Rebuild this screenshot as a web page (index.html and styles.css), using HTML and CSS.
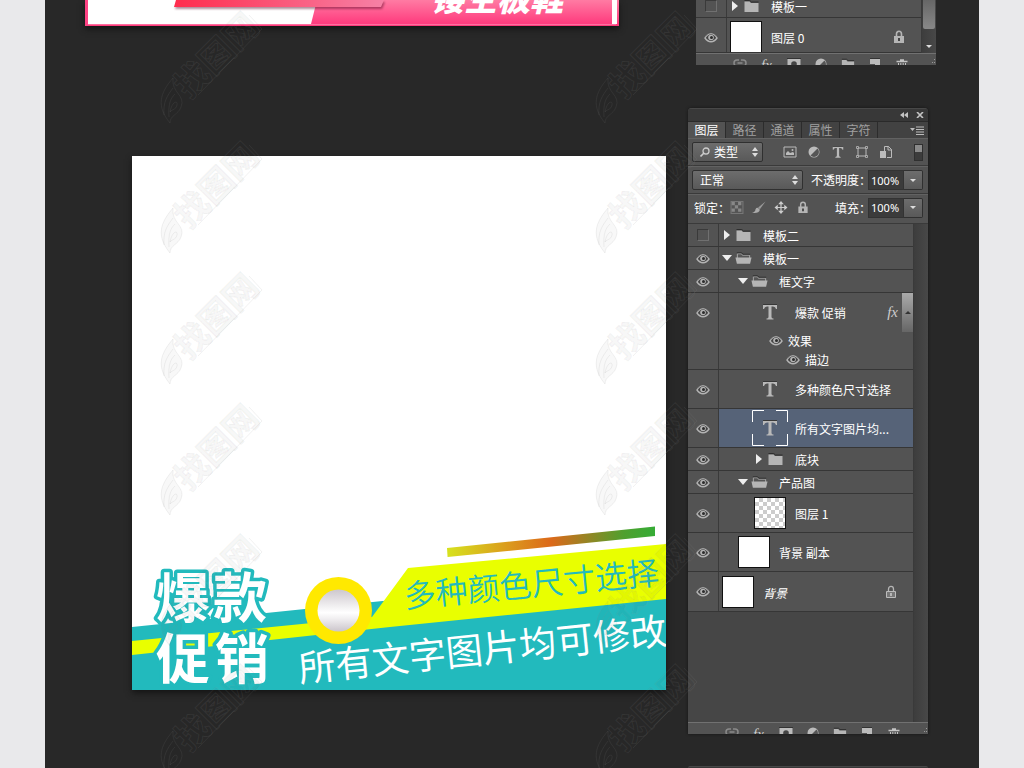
FILE: index.html
```html
<!DOCTYPE html>
<html lang="zh-CN">
<head>
<meta charset="utf-8">
<title>主图模板</title>
<link rel="stylesheet" href="styles.css">
</head>
<body>
<svg class="defs" aria-hidden="true">
  <symbol id="eye" viewBox="0 0 14 11"><path d="M1 6Q3.500 1.500 7 1.500T13 6Q10.500 9.800 7 9.800T1 6z" fill="#444" stroke="#b4b4b4" stroke-width="1.400"/><path d="M1.500 4Q4 .7 7 .7T12.500 4" fill="none" stroke="#3a3a3a" stroke-width=".6"/><circle cx="7" cy="5.500" r="2.800" fill="#b4b4b4"/><circle cx="7.500" cy="5.500" r="1.500" fill="#2c2c2c"/></symbol>
  <symbol id="folder" viewBox="0 0 16 12"><path d="M1 1.500h5l1.500 1.500H15V12H1z" fill="#b5b5b5"/><path d="M1 .5h5.300L8 2h7" fill="none" stroke="#2e2e2e"/></symbol>
  <symbol id="folder-open" viewBox="0 0 18 12"><path d="M2.500 6V1.500h4L8 3h7.500v3" fill="#555" stroke="#aaa"/><path d="M.5 5.500h17L16 12H2z" fill="#b5b5b5"/><path d="M2 .5h5L8.500 2H16" fill="none" stroke="#2e2e2e"/></symbol>
  <symbol id="right" viewBox="0 0 10 10"><path d="M2 0l6 5-6 5z" fill="#eee"/></symbol>
  <symbol id="down" viewBox="0 0 10 10"><path d="M0 2h10L5 8z" fill="#eee"/></symbol>
  <symbol id="type" viewBox="0 0 16 16"><path d="M1 1h14v4h-1q-.5-2.500-3-2.500H9.500V13q0 1.500 2 1.500v1h-7v-1q2 0 2-1.500V2.500H5Q2.500 2.500 2 5H1z" fill="#b9b9b9"/><path d="M1 .5h14" stroke="#383838"/></symbol>
  <symbol id="lock" viewBox="0 0 12 14"><path d="M3.500 7V4a2.500 2.700 0 0 1 5 0v3" fill="none" stroke="#b5b5b5" stroke-width="1.600"/><path d="M1 6h10v7H1z" fill="#b5b5b5"/><path d="M6 8v3" stroke="#444" stroke-width="2"/></symbol>
  <symbol id="lock-line" viewBox="0 0 12 14"><path d="M3.500 6V4a2.500 2.700 0 0 1 5 0v2" fill="none" stroke="#b5b5b5" stroke-width="1.300"/><path d="M1.500 6.500h9v6h-9z" fill="#777" stroke="#bbb"/><path d="M6 8v3" stroke="#ccc" stroke-width="1.500"/></symbol>
  <symbol id="half" viewBox="0 0 12 12"><circle cx="6" cy="6" r="5.500" fill="#bbb"/><path d="M9.500 2.500a4.900 4.900 0 0 1-7 7z" fill="#555"/></symbol>
  <symbol id="updown" viewBox="0 0 6 10"><path d="M0 4l3-4 3 4zM0 6l3 4 3-4z" fill="#ddd"/></symbol>
  <symbol id="link" viewBox="0 0 14 12"><path d="M6 2H4a3 3 0 0 0 0 6h2M8 2h2a3 3 0 0 1 0 6H8M4.500 5h5" fill="none" stroke="#8b8b8b" stroke-width="1.500"/></symbol>
  <symbol id="mask" viewBox="0 0 14 12"><path d="M.5 1h13v10H.5z" fill="#bbb"/><circle cx="7" cy="6" r="2.800" fill="#444"/><path d="M0 .5h14" stroke="#333"/></symbol>
  <symbol id="page" viewBox="0 0 12 12"><path d="M1 1h10v10H6V6H1z" fill="#bbb"/><path d="M1 .5h10" stroke="#333"/></symbol>
  <symbol id="trash" viewBox="0 0 12 12"><path d="M.5 3.500h11M4 2h4" stroke="#c4c4c4" stroke-width="1.500"/><path d="M2.500 5v7M4.800 5v7M7.200 5v7M9.500 5v7" stroke="#c4c4c4"/></symbol>
  <symbol id="grip" viewBox="0 0 6 8"><path d="M4 1h1v1H4zM2 4h1v1H2zM4 4h1v1H4z" fill="#999"/></symbol>
  <symbol id="mark" viewBox="0 0 110 120" overflow="visible">
    <path d="M13 114C-1 97 3 84 16 69c-2 15 13 17 8 29-3 8-11 8-11 16zM7 106c-1-13 3-19 9-27M12 108c-1-14 2-19 6-23M13 103c2-11 8-12 7-7s-5 4-7 7z"/>
    <text class="mark-text" transform="translate(32 91) rotate(-45)">找图网</text>
    <path d="M41 86L105 20 92 6" fill="none"/>
  </symbol>
</svg>

<main class="board">
  <section class="showcase showcase-first">
    <svg class="banner" viewBox="0 0 534 26" role="img" aria-label="镂空板鞋">
      <defs>
        <linearGradient id="pink" x1="0" y1="0" x2="0" y2="1"><stop offset="0" stop-color="#ff7ba3"/><stop offset=".85" stop-color="#ff3f80"/><stop offset="1" stop-color="#ff3b7d"/></linearGradient>
        <linearGradient id="red"><stop offset="0" stop-color="#ff2c4d"/><stop offset="1" stop-color="#f681a6"/></linearGradient>
      </defs>
      <path d="M0 0h534v26H0z" fill="url(#pink)"/>
      <path d="M0 0h3v26H0z" fill="#ff4385"/>
      <path d="M3 0h229l-6 24H3z" fill="#fff"/>
      <path d="M3 24.500h528" stroke="#ff6f9f"/>
      <path d="M527 0h5v24h-5z" fill="#fff"/>
      <path class="ribbon" d="M91 0h208l-3 7H89z" fill="url(#red)"/>
      <text class="banner-text" x="346" y="11">镂空板鞋</text>
    </svg>
    <aside class="panel panel-tail" aria-label="图层">
      <div class="list-area">
        <ul class="layers">
          <li class="layer group first-cut"><span class="vis"><input type="checkbox" class="hidden-box" aria-label="显示 模板一"></span><div class="body l0"><svg class="tri"><use href="#right"/></svg><svg class="fold"><use href="#folder"/></svg><span class="name">模板一</span></div></li>
          <li class="layer last-cut"><button class="vis" aria-label="隐藏 图层 0"><svg class="eye"><use href="#eye"/></svg></button><div class="body l0"><span class="thumb"></span><span class="name">图层 0</span><svg class="lock"><use href="#lock"/></svg></div></li>
        </ul>
        <div class="track"><span class="bar"></span><span class="caret"></span></div>
      </div>
      <footer class="tools">
        <button aria-label="链接"><svg><use href="#link"/></svg></button><button class="fx" aria-label="图层样式">fx</button><button aria-label="蒙版"><svg><use href="#mask"/></svg></button><button aria-label="调整"><svg><use href="#half"/></svg></button><button aria-label="新建组"><svg><use href="#folder"/></svg></button><button aria-label="新建图层"><svg><use href="#page"/></svg></button><button aria-label="删除"><svg><use href="#trash"/></svg></button><svg class="grip"><use href="#grip"/></svg>
      </footer>
    </aside>
  </section>

  <section class="showcase showcase-second">
    <svg class="art" viewBox="0 0 534 534" role="img" aria-label="爆款促销">
      <defs>
        <linearGradient id="rainbow"><stop offset="0" stop-color="#d6e21e"/><stop offset=".27" stop-color="#dba01d"/><stop offset=".5" stop-color="#dc691a"/><stop offset=".85" stop-color="#4fa02e"/><stop offset="1" stop-color="#35ac36"/></linearGradient>
        <linearGradient id="silver" x1="0" y1="0" x2="0" y2="1"><stop offset="0" stop-color="#cdc7cd"/><stop offset=".55" stop-color="#fff"/><stop offset=".7" stop-color="#f0eef0"/><stop offset="1" stop-color="#cbc5cb"/></linearGradient>
      </defs>
      <path d="M0 0h534v534H0z" fill="#fff"/>
      <path d="M0 471L270 443H534v91H0z" fill="#22babd"/>
      <path d="M0 485L240 461 276 412 534 388v55L258 471 0 499z" fill="#e9ff00"/>
      <path d="M315 392L523 370.500V380L315.600 401z" fill="url(#rainbow)"/>
      <circle cx="206.500" cy="454.500" r="33.500" fill="#ffe900"/>
      <circle cx="206.500" cy="454.500" r="21" fill="url(#silver)"/>
      <text class="promo" y="462"><tspan x="24">爆</tspan><tspan x="81">款</tspan></text>
      <text class="promo" y="523"><tspan x="24">促</tspan><tspan x="83">销</tspan></text>
      <text class="choice" transform="translate(273 452) rotate(-5.400)">多种颜色尺寸选择</text>
      <text class="editable" transform="translate(168 526) rotate(-5.900)">所有文字图片均可修改</text>
    </svg>

    <aside class="panel panel-full" aria-label="图层面板">
      <header class="titlebar">
        <button aria-label="折叠"><svg viewBox="0 0 8 6"><path d="M4 0v6L0 3zM8 0v6L4 3z" fill="#c4c4c4"/></svg></button>
        <button aria-label="关闭"><svg viewBox="0 0 8 6"><path d="M1 0l6 6M7 0L1 6" stroke="#c4c4c4" stroke-width="1.600"/></svg></button>
      </header>
      <nav class="tabs" role="tablist">
        <button role="tab" aria-selected="true">图层</button><button role="tab" aria-selected="false">路径</button><button role="tab" aria-selected="false">通道</button><button role="tab" aria-selected="false">属性</button><button role="tab" aria-selected="false">字符</button>
        <button class="menu" aria-label="面板菜单"><svg viewBox="0 0 14 9"><path d="M0 2h5L2.500 5zM6 .5h8v1H6zM6 3h8v1H6zM6 5.500h8v1H6zM6 8h8v1H6z" fill="#bbb"/></svg></button>
      </nav>
      <div class="row filter">
        <label class="pick pick-kind"><svg class="lens" viewBox="0 0 10 10"><circle cx="6" cy="4" r="3" fill="none" stroke="#ccc" stroke-width="1.300"/><path d="M4 6L.5 9.500" stroke="#ccc" stroke-width="1.600"/></svg><select aria-label="筛选类型"><option>类型</option></select><svg class="ud"><use href="#updown"/></svg></label>
        <div class="kinds">
          <button aria-label="像素图层"><svg viewBox="0 0 14 12"><path d="M1 1h12v10H1z" fill="none" stroke="#bbb"/><path d="M3 9V7l2-2 2 2 3-1 1 1v2z" fill="#bbb"/><circle cx="9.500" cy="4" r="1" fill="#bbb"/></svg></button>
          <button aria-label="调整图层"><svg><use href="#half"/></svg></button>
          <button aria-label="文字图层"><svg><use href="#type"/></svg></button>
          <button aria-label="形状图层"><svg viewBox="0 0 12 12"><path d="M2 2h8v8H2z" fill="none" stroke="#bbb"/><path d="M.5.5h2v2h-2zM9.500.5h2v2h-2zM.5 9.500h2v2h-2zM9.500 9.500h2v2h-2z" fill="#555" stroke="#bbb" stroke-width=".8"/></svg></button>
          <button aria-label="智能对象"><svg viewBox="0 0 12 12"><path d="M4.500 5V.5h4l3 3v8H7" fill="none" stroke="#bbb"/><path d="M8 0v4h4" fill="none" stroke="#bbb"/><path d="M0 5h6v7H0z" fill="#bbb"/></svg></button>
        </div>
        <button class="toggle" aria-label="打开或关闭筛选"></button>
      </div>
      <div class="row blend">
        <label class="pick pick-mode"><select aria-label="混合模式"><option>正常</option></select><svg class="ud"><use href="#updown"/></svg></label>
        <label class="amount"><span>不透明度：</span><input type="text" value="100%"></label><button class="drop" aria-label="调整不透明度"></button>
      </div>
      <div class="row locks">
        <span class="caption">锁定：</span>
        <div class="lock-set">
          <button aria-label="锁定透明像素"><svg viewBox="0 0 12 12"><path d="M.5.5h11v11H.5z" fill="#555" stroke="#777"/><path d="M1 1h3v3H1zM7 1h3v3H7zM4 4h3v3H4zM1 7h3v3H1zM7 7h3v3H7z" fill="#888"/></svg></button>
          <button aria-label="锁定图像像素"><svg viewBox="0 0 16 14"><path d="M15.500 0L7 7l2 2z" fill="#999"/><path d="M7 7.500l2 2Q8 14 0 13q4-1 4-4 1-2 3-1.500z" fill="#aaa"/></svg></button>
          <button aria-label="锁定位置"><svg viewBox="0 0 14 14"><path d="M7 2v10M2 7h10" stroke="#ccc" stroke-width="1.300"/><path d="M7 0l3 3.500H4zM7 14l3-3.500H4zM0 7l3.500-3v6zM14 7l-3.500-3v6z" fill="#ccc"/></svg></button>
          <button aria-label="锁定全部"><svg><use href="#lock"/></svg></button>
        </div>
        <label class="amount"><span>填充：</span><input type="text" value="100%"></label><button class="drop" aria-label="调整填充"></button>
      </div>

      <div class="list-area">
        <ul class="layers">
          <li class="layer group"><span class="vis"><input type="checkbox" class="hidden-box" aria-label="显示 模板二"></span><div class="body l0"><svg class="tri"><use href="#right"/></svg><svg class="fold"><use href="#folder"/></svg><span class="name">模板二</span></div></li>
          <li class="layer group"><button class="vis" aria-label="隐藏 模板一"><svg class="eye"><use href="#eye"/></svg></button><div class="body l0"><svg class="tri"><use href="#down"/></svg><svg class="fold"><use href="#folder-open"/></svg><span class="name">模板一</span></div></li>
          <li class="layer group"><button class="vis" aria-label="隐藏 框文字"><svg class="eye"><use href="#eye"/></svg></button><div class="body l1"><svg class="tri"><use href="#down"/></svg><svg class="fold"><use href="#folder-open"/></svg><span class="name">框文字</span></div></li>
          <li class="layer styled"><button class="vis" aria-label="隐藏 爆款 促销"><svg class="eye"><use href="#eye"/></svg></button>
            <div class="stack">
              <div class="body l2"><span class="glyph"><svg><use href="#type"/></svg></span><span class="name">爆款 促销</span><span class="fx">fx</span></div>
              <div class="effect"><svg class="eye"><use href="#eye"/></svg>效果</div>
              <div class="effect sub"><svg class="eye"><use href="#eye"/></svg>描边</div>
            </div>
            <span class="scroll-thumb"></span></li>
          <li class="layer"><button class="vis" aria-label="隐藏 多种颜色尺寸选择"><svg class="eye"><use href="#eye"/></svg></button><div class="body l2"><span class="glyph"><svg><use href="#type"/></svg></span><span class="name">多种颜色尺寸选择</span></div></li>
          <li class="layer selected"><button class="vis" aria-label="隐藏 所有文字图片均可修改"><svg class="eye"><use href="#eye"/></svg></button><div class="body l2"><span class="glyph"><svg><use href="#type"/></svg><svg class="frame" viewBox="0 0 36 36"><path d="M.5 12V.5H12M24 .5h11.500V12M35.500 24v11.500H24M12 35.500H.5V24" fill="none" stroke="#fff"/></svg></span><span class="name">所有文字图片均...</span></div></li>
          <li class="layer group"><button class="vis" aria-label="隐藏 底块"><svg class="eye"><use href="#eye"/></svg></button><div class="body l2"><svg class="tri"><use href="#right"/></svg><svg class="fold"><use href="#folder"/></svg><span class="name">底块</span></div></li>
          <li class="layer group"><button class="vis" aria-label="隐藏 产品图"><svg class="eye"><use href="#eye"/></svg></button><div class="body l1"><svg class="tri"><use href="#down"/></svg><svg class="fold"><use href="#folder-open"/></svg><span class="name">产品图</span></div></li>
          <li class="layer"><button class="vis" aria-label="隐藏 图层 1"><svg class="eye"><use href="#eye"/></svg></button><div class="body l2"><span class="thumb checker"></span><span class="name">图层 1</span></div></li>
          <li class="layer"><button class="vis" aria-label="隐藏 背景 副本"><svg class="eye"><use href="#eye"/></svg></button><div class="body l1"><span class="thumb"></span><span class="name">背景 副本</span></div></li>
          <li class="layer base"><button class="vis" aria-label="隐藏 背景"><svg class="eye"><use href="#eye"/></svg></button><div class="body l0"><span class="thumb"></span><em class="name">背景</em><svg class="lock"><use href="#lock-line"/></svg></div></li>
        </ul>
        <div class="track"></div>
      </div>
      <footer class="tools">
        <button aria-label="链接"><svg><use href="#link"/></svg></button><button class="fx" aria-label="图层样式">fx</button><button aria-label="蒙版"><svg><use href="#mask"/></svg></button><button aria-label="调整"><svg><use href="#half"/></svg></button><button aria-label="新建组"><svg><use href="#folder"/></svg></button><button aria-label="新建图层"><svg><use href="#page"/></svg></button><button aria-label="删除"><svg><use href="#trash"/></svg></button><svg class="grip"><use href="#grip"/></svg>
      </footer>
    </aside>
  </section>

  <section class="showcase showcase-next"><div class="panel panel-edge"></div></section>

  <svg class="marks" aria-hidden="true">
    <g id="mark-column">
      <use href="#mark" x="112" y="9" width="110" height="120"/>
      <use href="#mark" x="112" y="139" width="110" height="120"/>
      <use href="#mark" x="112" y="270" width="110" height="120"/>
      <use href="#mark" x="112" y="401" width="110" height="120"/>
      <use href="#mark" x="112" y="532" width="110" height="120"/>
      <use href="#mark" x="112" y="662" width="110" height="120"/>
    </g>
    <use href="#mark-column" x="435"/>
  </svg>
</main>
</body>
</html>
```

FILE: styles.css
```css
* { box-sizing: border-box; }
body {
  margin: 0;
  background: #e9e9eb;
  color: #fff;
  font: 12px/16px "Noto Sans CJK SC", sans-serif;
}
button, input, select {
  margin: 0;
  padding: 0;
  border: 0;
  background: none;
  color: inherit;
  font: inherit;
}
button { display: flex; align-items: center; justify-content: center; }
svg { display: block; flex: none; }
.defs { position: absolute; width: 0; height: 0; }

.board {
  position: relative;
  margin: 0 45px;
  min-height: 100vh;
  overflow: hidden;
  background: #282828;
}
.showcase { display: flex; align-items: flex-start; }
.showcase-first { padding: 0 43px 0 40px; gap: 77px; }
.showcase-second { padding: 43px 51px 32px 87px; gap: 22px; }
.showcase-next { justify-content: flex-end; padding-right: 51px; }

/* artwork */
.banner, .art { flex: 1 1 0; min-width: 0; box-shadow: 0 3px 6px #151515; }
.art { margin-top: 48px; }
.ribbon { filter: drop-shadow(1px 2px 1px rgba(80, 0, 30, .45)); }
.banner-text { font-size: 33px; font-weight: 900; font-style: italic; fill: #fff; }
.promo {
  font-size: 54px;
  font-weight: 700;
  fill: #fff;
  stroke: #22babd;
  stroke-width: 7px;
  stroke-linejoin: round;
  paint-order: stroke;
}
.choice { font-size: 32px; font-weight: 350; fill: #22babd; }
.editable { font-size: 37px; font-weight: 400; fill: #fff; }

/* panel */
.panel { flex: 0 0 240px; overflow: hidden; background: #535353; }
.panel-full { border-radius: 4px 4px 0 0; box-shadow: 0 0 3px #151515; }
.panel-edge { height: 2px; border-top: 1px solid #484848; border-radius: 4px 4px 0 0; background: #383838; }
.titlebar {
  display: flex;
  justify-content: flex-end;
  align-items: center;
  gap: 8px;
  height: 13px;
  padding-right: 4px;
  border-top: 1px solid #484848;
  background: #383838;
}
.titlebar svg { width: 8px; height: 6px; }
.tabs {
  display: flex;
  height: 17px;
  border-top: 1px solid #2a2a2a;
  background: #424242;
}
.tabs button { width: 38px; border-right: 1px solid #2c2c2c; color: #a0a0a0; }
.tabs button[aria-selected="true"] { background: #535353; color: #fff; }
.tabs .menu { margin-left: auto; width: 22px; border: 0; }
.menu svg { width: 14px; height: 9px; }
.row {
  display: flex;
  align-items: center;
  height: 28px;
  padding: 0 5px 0 4px;
  border-top: 1px solid #626262;
  border-bottom: 1px solid #3a3a3a;
}
.row.locks { height: 30px; padding-bottom: 3px; }
.pick {
  display: flex;
  align-items: center;
  height: 20px;
  padding: 0 4px 0 7px;
  border: 1px solid #303030;
  border-radius: 2px;
  background: linear-gradient(#6d6d6d, #595959);
}
.pick-kind { width: 71px; }
.pick-mode { width: 111px; }
.pick select { flex: 1; min-width: 0; appearance: none; outline: none; }
.lens { width: 10px; height: 10px; margin-right: 4px; }
.ud { width: 6px; height: 10px; }
.kinds { display: flex; flex: 1; padding: 0 21px 0 20px; justify-content: space-between; }
.kinds svg { width: 14px; height: 12px; }
.toggle {
  width: 9px;
  height: 17px;
  border: 1px solid #303030;
  background: linear-gradient(#8a8a8a 50%, #3c3c3c 50%);
}
.amount { display: flex; align-items: center; margin-left: auto; }
.amount input {
  width: 36px;
  height: 20px;
  padding: 0 2px;
  border: 1px solid #333;
  background: #3b3b3b;
  font: 11px/16px "Noto Sans", sans-serif;
}
.amount span { margin-right: -3px; }
.drop {
  width: 19px;
  height: 20px;
  border: 1px solid #303030;
  border-left: 0;
  border-radius: 0 2px 2px 0;
  background: linear-gradient(#6d6d6d, #595959);
}
.drop::before, .caret {
  content: "";
  border: 3px solid transparent;
  border-top-color: #ddd;
  border-bottom: 0;
}
.caption { padding-left: 2px; }
.lock-set { display: flex; gap: 8px; }
.lock-set svg { width: 14px; height: 13px; }

/* layer list */
.list-area { display: flex; background: #464646; }
.panel-full .list-area { min-height: 498px; }
.layers { flex: 1; margin: 0; padding: 0; list-style: none; }
.track {
  display: flex;
  flex-direction: column;
  align-items: center;
  width: 15px;
  border-left: 1px solid #3a3a3a;
  background: linear-gradient(90deg, #3d3d3d, #484848);
}
.layer {
  position: relative;
  display: flex;
  height: 39px;
  border-bottom: 1px solid #363636;
  background: #535353;
}
.layer.group { height: 23px; }
.layer.styled { height: 77px; }
.layer.base { height: 40px; }
.vis {
  display: flex;
  align-items: center;
  justify-content: center;
  width: 31px;
  height: 100%;
  border-right: 1px solid #3a3a3a;
}
.styled .vis { align-items: flex-start; padding-top: 14px; }
.eye { width: 14px; height: 11px; }
.hidden-box { appearance: none; width: 12px; height: 12px; border: 1px solid #3a3a3a; border-right-color: #707070; border-bottom-color: #707070; }
.body { display: flex; flex: 1; align-items: center; padding-left: 3px; }
.body.l1 { padding-left: 19px; }
.body.l2 { padding-left: 35px; }
.tri { width: 10px; height: 10px; margin-right: 3px; }
.fold { width: 17px; height: 12px; margin-right: 2px; }
.name { margin-left: 9px; padding-top: 2px; white-space: nowrap; }
.glyph, .thumb { flex: none; width: 32px; height: 32px; }
.glyph { position: relative; display: flex; align-items: center; justify-content: center; }
.glyph svg { width: 16px; height: 16px; }
.glyph .frame { position: absolute; inset: -2px; width: 36px; height: 36px; }
.thumb { border: 1px solid #111; background: #fff; }
.checker { background: repeating-conic-gradient(#ccc 0 25%, #fff 0 50%) 0 0 / 8px 8px; }
.selected .body { background: #566378; }
.lock { width: 12px; height: 14px; margin-left: auto; margin-right: 16px; }
.stack { flex: 1; }
.stack .body { height: 38px; }
.fx { font: italic 15px/14px "Liberation Serif", serif; color: #ccc; }
.body .fx { margin-left: auto; margin-right: 15px; }
.effect { display: flex; align-items: center; gap: 5px; height: 19px; padding-left: 50px; }
.effect.sub { padding-left: 67px; }
.scroll-thumb {
  position: absolute;
  right: 0;
  top: 0;
  display: flex;
  align-items: center;
  justify-content: center;
  width: 11px;
  height: 39px;
  background: linear-gradient(#aaa, #666);
}
.scroll-thumb::before { content: ""; border: 3px solid transparent; border-top: 0; border-bottom-color: #333; }

.tools {
  display: flex;
  align-items: flex-start;
  height: 12px;
  overflow: hidden;
  padding: 4px 0 0 30px;
  border-top: 1px solid #717171;
  background: #535353;
}
.tools button { width: 27px; }
.tools button svg { width: 14px; height: 12px; }
.tools .grip { width: 6px; height: 8px; margin-left: auto; }

/* lower end of the scrolled panel */
.first-cut { margin-top: -5px; }
.layer.last-cut { height: 35px; overflow: hidden; }
.last-cut .vis, .last-cut .body { height: 38px; }
.panel-tail .track { justify-content: space-between; padding-bottom: 5px; }
.bar { width: 12px; height: 29px; border-radius: 0 0 2px 2px; background: linear-gradient(#666, #888); }

/* watermark */
.marks { position: absolute; inset: 0; width: 100%; height: 100%; pointer-events: none; }
.marks use { fill: rgba(20, 20, 20, .03); stroke: rgba(140, 140, 140, .12); }
.mark-text { font-size: 34px; font-weight: 700; }
```
